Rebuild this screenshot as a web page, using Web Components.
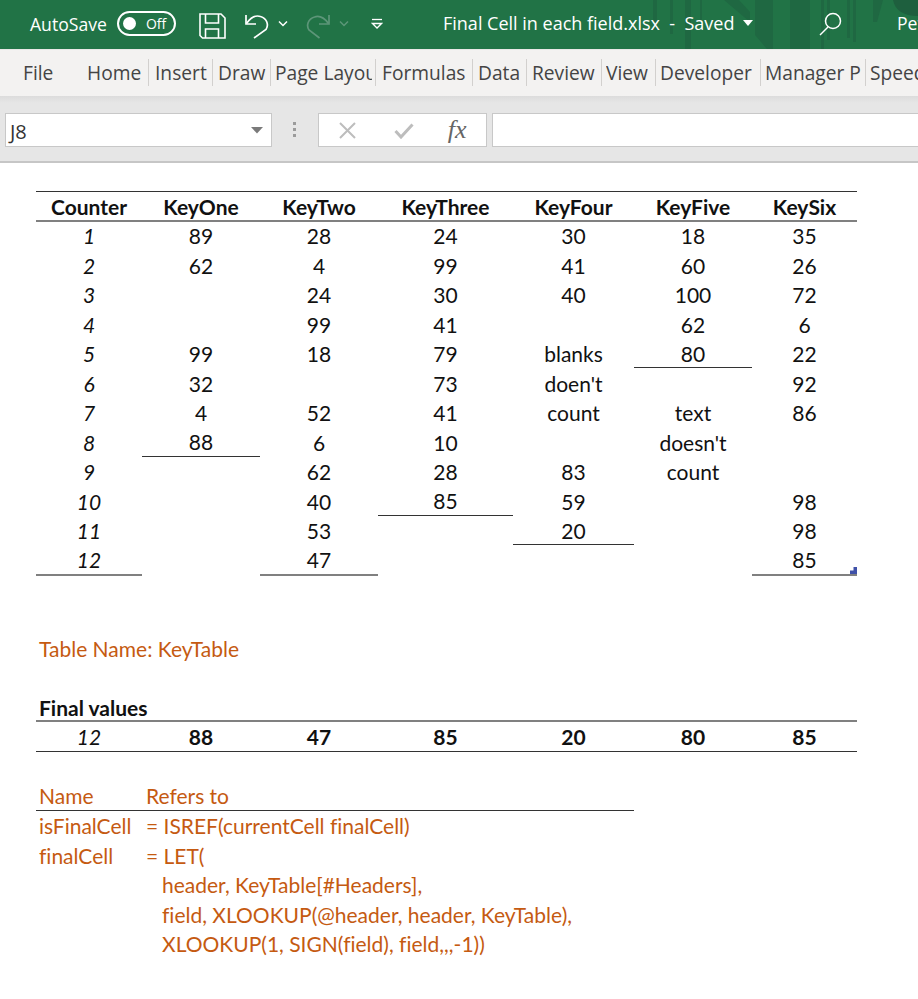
<!DOCTYPE html>
<html>
<head>
<meta charset="utf-8">
<title>Final Cell in each field.xlsx</title>
<style>
    html, body { margin: 0; background: #fff; }
    body { width: 918px; height: 999px; overflow: hidden; }
</style>
</head>
<body>
<excel-titlebar></excel-titlebar>
<excel-tabs></excel-tabs>
<excel-formula-bar></excel-formula-bar>
<excel-sheet></excel-sheet>

<script>
class ExcelTitlebar extends HTMLElement {
    constructor() {
        super();
        this.attachShadow({mode: 'open'});
        this.shadowRoot.innerHTML = `
            <style>
                :host {
                    display: flex;
                    align-items: center;
                    position: relative;
                    height: 49px;
                    background: #217346;
                    color: #fff;
                    font: 17.6px "Open Sans", sans-serif;
                    white-space: nowrap;
                    overflow: hidden;
                }
                .pattern { position: absolute; left: 640px; top: 0; }
                .row { display: flex; align-items: center; position: relative; top: -1px; }
                .auto { margin-left: 30px; }
                .toggle {
                    display: flex; align-items: center; box-sizing: border-box;
                    width: 59px; height: 25px; margin-left: 10px;
                    border: 2px solid #fff; border-radius: 13px; padding-left: 4px;
                    font-size: 14px;
                }
                .toggle i { width: 13px; height: 13px; border-radius: 50%; background: #fff; margin-right: 10px; }
                svg.icon { display: block; fill: none; stroke: #fff; }
                .title { position: absolute; left: 443px; top: 11px; font-size: 18px; }
                .search { position: absolute; left: 819px; top: 12px; }
                .user { position: absolute; left: 897px; top: 11px; }
            </style>
            <svg class="pattern" width="278" height="49">
                <g fill="#1f6842">
                    <rect x="13" y="0" width="4" height="30"/>
                    <rect x="30" y="0" width="3" height="34"/>
                    <rect x="45" y="0" width="6" height="49"/>
                    <rect x="60" y="0" width="2" height="22"/>
                    <path d="M84 0h15L110 12v10z"/>
                    <path d="M115 0h18v49h-6l-12-14z"/>
                    <rect x="150" y="0" width="20" height="49"/>
                    <rect x="181" y="0" width="3" height="49"/>
                    <rect x="187" y="0" width="3" height="40"/>
                    <rect x="207" y="0" width="3" height="38"/>
                    <rect x="213" y="0" width="3" height="42"/>
                    <path d="M233 0h10l-6 22h-4z"/>
                </g>
                <path d="M253 0c2 10 10 16 25 16V0z" fill="#1e5f3e"/>
            </svg>
            <div class="row auto">AutoSave
                <div class="toggle"><i></i>Off</div>
            </div>
            <svg class="icon" style="position:absolute;left:199px;top:13px" width="27" height="26" viewBox="0 0 27 26" stroke-width="1.6">
                <path d="M1 1h21l4 4v20H3.500L1 22.500z"/>
                <path d="M6.500 1v9h13V1"/>
                <path d="M6.500 25v-9h13v9"/>
            </svg>
            <svg class="icon" style="position:absolute;left:245px;top:12px" width="25" height="27" viewBox="0 0 25 27" stroke-width="1.7">
                <path d="M1 3v9h10"/>
                <path d="M1.500 11.500C6 5 11 3 15.500 4.500 22 6.500 24 13 21 17.500L9 26"/>
            </svg>
            <svg class="icon" style="position:absolute;left:278px;top:20px" width="10" height="8" viewBox="0 0 10 8" stroke-width="1.500">
                <path d="M1 1.500l4 4 4-4"/>
            </svg>
            <svg class="icon" style="position:absolute;left:306px;top:13px;stroke:#5d9679" width="24" height="26" viewBox="0 0 24 26" stroke-width="1.700">
                <path d="M23 2v9H13"/>
                <path d="M22.500 10.500C18 4.500 13 2.500 8.500 4 2 6 0 12.500 3 17l10.500 8"/>
            </svg>
            <svg class="icon" style="position:absolute;left:339px;top:20px;stroke:#5d9679" width="10" height="8" viewBox="0 0 10 8" stroke-width="1.500">
                <path d="M1 1.500l4 4 4-4"/>
            </svg>
            <svg class="icon" style="position:absolute;left:371px;top:18px" width="12" height="12" viewBox="0 0 12 12" stroke-width="1.300">
                <path d="M1 1.500h10"/>
                <path d="M1.500 5.500l4.500 4.500 4.500-4.500z" fill="none"/>
            </svg>
            <div class="title">Final Cell in each field.xlsx&nbsp; -&nbsp; Saved</div>
            <svg style="position:absolute;left:742px;top:20px" width="12" height="7" viewBox="0 0 12 7"><path d="M1 0h10l-5 6z" fill="#fff"/></svg>
            <svg class="icon search" width="24" height="24" viewBox="0 0 24 24" stroke-width="1.500">
                <circle cx="14" cy="9" r="7.500"/>
                <path d="M9 15L1 23"/>
            </svg>
            <div class="user">Pet</div>
        `;
    }
}

class ExcelTabs extends HTMLElement {
    constructor() {
        super();
        this.attachShadow({mode: 'open'});
        // name, left edge, clipped width
        const tabs = [
            ['Home', 87, 60], ['Insert', 155, 52], ['Draw', 218, 48], ['Page Layout', 275, 97],
            ['Formulas', 382, 86], ['Data', 478, 43], ['Review', 532, 65], ['View', 606, 46],
            ['Developer', 660, 94], ['Manager P', 765, 97], ['Speed', 870, 48]
        ];
        const seps = [148, 212, 270, 375, 472, 526, 601, 655, 760, 865];
        this.shadowRoot.innerHTML = `
            <style>
                :host {
                    display: block;
                    position: relative;
                    height: 47px;
                    background: #f3f2f1;
                    color: #444;
                    border-top: 1px solid #e9e8e6;
                    box-sizing: border-box;
                    font: 19.2px "Open Sans", sans-serif;
                    overflow: hidden;
                }
                span {
                    position: absolute; top: 10px; line-height: 26px;
                    white-space: nowrap; overflow: hidden;
                }
                b { position: absolute; top: 9px; width: 1px; height: 27px; background: #d2d0ce; }
            </style>
            <span style="left:23px">File</span>
            ${tabs.map(t => `<span style="left:${t[1]}px;width:${t[2]}px">${t[0]}</span>`).join('')}
            ${seps.map(x => `<b style="left:${x}px"></b>`).join('')}
        `;
    }
}

class ExcelFormulaBar extends HTMLElement {
    constructor() {
        super();
        this.attachShadow({mode: 'open'});
        this.shadowRoot.innerHTML = `
            <style>
                :host {
                    display: flex;
                    align-items: flex-start;
                    box-sizing: border-box;
                    height: 67px;
                    padding: 17px 0 0 5px;
                    background: linear-gradient(#dcdcdc 0, #e6e6e6 7px);
                    border-bottom: 2px solid #c6c6c6;
                    font: 18px "Open Sans", sans-serif;
                    color: #444;
                }
                .box {
                    box-sizing: border-box; height: 34px;
                    background: #fff; border: 1px solid #c8c8c8;
                    display: flex; align-items: center; position: relative;
                }
                .name { width: 267px; padding: 2px 0 0 4px; font-size: 20px; color: #333; }
                .name svg { position: absolute; left: 245px; top: 13px; }
                .grip { width: 46px; display: flex; flex-direction: column; align-items: center; gap: 3px; padding-top: 9px; }
                .grip i { width: 3px; height: 3px; background: #9b9b9b; }
                .btns { width: 170px; }
                .btns svg { position: absolute; }
                .fx {
                    position: absolute; left: 129px; top: 1px; line-height: 30px;
                    font: italic 26px "Liberation Serif", serif; color: #666;
                }
                .input { width: 426px; margin-left: 5px; border-right: 0; }
            </style>
            <div class="box name">J8
                <svg width="12" height="7" viewBox="0 0 12 7"><path d="M0 0h12L6 6.500z" fill="#7a7a7a"/></svg>
            </div>
            <div class="grip"><i></i><i></i><i></i></div>
            <div class="box btns">
                <svg style="left:20px;top:8px" width="17" height="17" viewBox="0 0 17 17"><path d="M1 1l15 15M16 1L1 16" stroke="#bdbdbd" stroke-width="2" fill="none"/></svg>
                <svg style="left:75px;top:9px" width="20" height="16" viewBox="0 0 20 16"><path d="M1.500 8l5.500 6L18.500 1.500" stroke="#bdbdbd" stroke-width="3" fill="none"/></svg>
                <span class="fx">fx</span>
            </div>
            <div class="box input"></div>
        `;
    }
}

class ExcelSheet extends HTMLElement {
    constructor() {
        super();
        this.attachShadow({mode: 'open'});
        const head = ['Counter', 'KeyOne', 'KeyTwo', 'KeyThree', 'KeyFour', 'KeyFive', 'KeySix'];
        // columns are counter + the six keys, '' is an empty cell
        const rows = [
            ['1', '89', '28', '24', '30', '18', '35'],
            ['2', '62', '4', '99', '41', '60', '26'],
            ['3', '', '24', '30', '40', '100', '72'],
            ['4', '', '99', '41', '', '62', '6'],
            ['5', '99', '18', '79', 'blanks', '80', '22'],
            ['6', '32', '', '73', "doen't", '', '92'],
            ['7', '4', '52', '41', 'count', 'text', '86'],
            ['8', '88', '6', '10', '', "doesn't", ''],
            ['9', '', '62', '28', '83', 'count', ''],
            ['10', '', '40', '85', '59', '', '98'],
            ['11', '', '53', '', '20', '', '98'],
            ['12', '', '47', '', '', '', '85']
        ];
        // last filled row of each column gets the rule under it
        const lastRow = [11, 7, 11, 9, 10, 4, 11];

        let html = head.map(h => `<div class="c hd">${h}</div>`).join('');
        rows.forEach((r, i) => {
            r.forEach((v, j) => {
                let cls = 'c';
                if (j == 0) cls += ' it';
                if (lastRow[j] == i) cls += i == 11 ? ' under soft' : ' under';
                html += `<div class="${cls}">${v}</div>`;
            });
        });
        html += `<div class="l or" style="grid-row:16">Table Name: KeyTable</div>`;
        html += `<div class="l strong" style="grid-row:18">Final values</div>`;
        html += `<div class="c it fin" style="grid-row:19">12</div>`;
        ['88', '47', '85', '20', '80', '85'].forEach(v => {
            html += `<div class="c fin strong" style="grid-row:19">${v}</div>`;
        });
        html += `<div class="l or nm" style="grid-row:21;grid-column:1/6">Name<span class="col2">Refers to</span></div>`;
        html += `<div class="l or" style="grid-row:22;grid-column:1/6">isFinalCell<span class="col3">= ISREF(currentCell finalCell)</span></div>`;
        html += `<div class="l or" style="grid-row:23;grid-column:1/6">finalCell<span class="col3">= LET(</span></div>`;
        html += `<div class="l or" style="grid-row:24;grid-column:1/6"><span class="col4">header, KeyTable[#Headers],</span></div>`;
        html += `<div class="l or" style="grid-row:25;grid-column:1/6"><span class="col4">field, XLOOKUP(@header, header, KeyTable),</span></div>`;
        html += `<div class="l or" style="grid-row:26;grid-column:1/6"><span class="col4">XLOOKUP(1, SIGN(field), field,,,-1))</span></div>`;

        this.shadowRoot.innerHTML = `
            <style>
                :host {
                    display: block;
                    padding: 28px 0 0 36px;
                    font: 21px "Lato", sans-serif;
                    font-variant-ligatures: none;
                    color: #111;
                }
                .grid {
                    display: grid;
                    position: relative;
                    width: 821px;
                    grid-template-columns: 106px 118px 118px 135px 121px 118px 105px;
                    grid-template-rows: repeat(26, 29.5px);
                }
                .c {
                    box-sizing: border-box;
                    display: flex; align-items: center; justify-content: center;
                    white-space: nowrap;
                    padding-top: 1px;
                }
                .hd {
                    font-weight: 700;
                    border-top: 1px solid #333;
                    border-bottom: 1px solid #808080;
                    box-shadow: 0 1px 0 #808080;
                }
                .it { font-style: italic; }
                .under { border-bottom: 1px solid #333; }
                .under.soft { border-bottom-color: #808080; box-shadow: 0 1px 0 #808080; }
                .fin { border-bottom: 1px solid #333; box-shadow: 0 -2px 0 #808080; }
                .strong { font-weight: 700; }
                .l {
                    grid-column: 1 / 8;
                    display: flex; align-items: center; white-space: nowrap;
                    padding: 1px 0 0 3px; position: relative; box-sizing: border-box;
                }
                .or { color: #c55a11; }
                .nm { border-bottom: 1px solid #333; }
                .col2 { position: absolute; left: 110px; }
                .col3 { position: absolute; left: 110px; }
                .col4 { position: absolute; left: 126px; }
                .handle {
                    position: absolute; left: 814px; top: 376px;
                    width: 7px; height: 7px; background: #3f51a8;
                    clip-path: polygon(100% 0, 100% 100%, 0 100%, 0 50%, 50% 50%, 50% 0);
                }
            </style>
            <div class="grid">
                ${html}
                <div class="handle"></div>
            </div>
        `;
    }
}

customElements.define('excel-titlebar', ExcelTitlebar);
customElements.define('excel-tabs', ExcelTabs);
customElements.define('excel-formula-bar', ExcelFormulaBar);
customElements.define('excel-sheet', ExcelSheet);
</script>
</body>
</html>
